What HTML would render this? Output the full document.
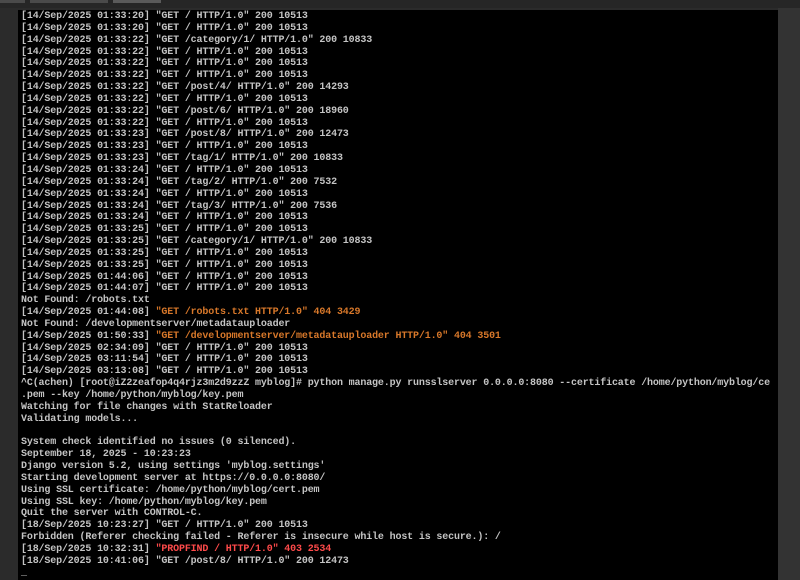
<!DOCTYPE html>
<html><head><meta charset="utf-8"><style>
html,body{margin:0;padding:0;width:800px;height:580px;overflow:hidden;background:#2b2b2b;}
.top{position:absolute;left:0;top:0;width:800px;height:8px;background:#262626;}
.b{position:absolute;top:0;height:3px;background:#4a4a4a;}
.right{position:absolute;left:778px;top:8px;width:22px;height:572px;background:#333;}
.term{position:absolute;left:18px;top:10px;width:760px;height:570px;background:#000;}
pre{position:absolute;left:21px;top:11px;margin:0;font-family:"Liberation Mono",monospace;font-size:10px;letter-spacing:-0.15px;line-height:11.85px;color:#c4c4c4;font-weight:bold;white-space:pre;}
.o{color:#d8782a}.r{color:#ff4a4a}
</style></head><body>
<div class="top"></div><div class="b" style="left:0;width:25px"></div><div class="b" style="left:30px;width:78px"></div><div class="b" style="left:113px;width:48px;background:#5a5a5a"></div>
<div class="right"></div>
<div class="term"></div>
<pre>[14/Sep/2025 01:33:20] "GET / HTTP/1.0" 200 10513
[14/Sep/2025 01:33:20] "GET / HTTP/1.0" 200 10513
[14/Sep/2025 01:33:22] "GET /category/1/ HTTP/1.0" 200 10833
[14/Sep/2025 01:33:22] "GET / HTTP/1.0" 200 10513
[14/Sep/2025 01:33:22] "GET / HTTP/1.0" 200 10513
[14/Sep/2025 01:33:22] "GET / HTTP/1.0" 200 10513
[14/Sep/2025 01:33:22] "GET /post/4/ HTTP/1.0" 200 14293
[14/Sep/2025 01:33:22] "GET / HTTP/1.0" 200 10513
[14/Sep/2025 01:33:22] "GET /post/6/ HTTP/1.0" 200 18960
[14/Sep/2025 01:33:22] "GET / HTTP/1.0" 200 10513
[14/Sep/2025 01:33:23] "GET /post/8/ HTTP/1.0" 200 12473
[14/Sep/2025 01:33:23] "GET / HTTP/1.0" 200 10513
[14/Sep/2025 01:33:23] "GET /tag/1/ HTTP/1.0" 200 10833
[14/Sep/2025 01:33:24] "GET / HTTP/1.0" 200 10513
[14/Sep/2025 01:33:24] "GET /tag/2/ HTTP/1.0" 200 7532
[14/Sep/2025 01:33:24] "GET / HTTP/1.0" 200 10513
[14/Sep/2025 01:33:24] "GET /tag/3/ HTTP/1.0" 200 7536
[14/Sep/2025 01:33:24] "GET / HTTP/1.0" 200 10513
[14/Sep/2025 01:33:25] "GET / HTTP/1.0" 200 10513
[14/Sep/2025 01:33:25] "GET /category/1/ HTTP/1.0" 200 10833
[14/Sep/2025 01:33:25] "GET / HTTP/1.0" 200 10513
[14/Sep/2025 01:33:25] "GET / HTTP/1.0" 200 10513
[14/Sep/2025 01:44:06] "GET / HTTP/1.0" 200 10513
[14/Sep/2025 01:44:07] "GET / HTTP/1.0" 200 10513
Not Found: /robots.txt
[14/Sep/2025 01:44:08] <span class="o">"GET /robots.txt HTTP/1.0" 404 3429</span>
Not Found: /developmentserver/metadatauploader
[14/Sep/2025 01:50:33] <span class="o">"GET /developmentserver/metadatauploader HTTP/1.0" 404 3501</span>
[14/Sep/2025 02:34:09] "GET / HTTP/1.0" 200 10513
[14/Sep/2025 03:11:54] "GET / HTTP/1.0" 200 10513
[14/Sep/2025 03:13:08] "GET / HTTP/1.0" 200 10513
^C(achen) [root@iZ2zeafop4q4rjz3m2d9zzZ myblog]# python manage.py runsslserver 0.0.0.0:8080 --certificate /home/python/myblog/ce
.pem --key /home/python/myblog/key.pem
Watching for file changes with StatReloader
Validating models...

System check identified no issues (0 silenced).
September 18, 2025 - 10:23:23
Django version 5.2, using settings 'myblog.settings'
Starting development server at https://0.0.0.0:8080/
Using SSL certificate: /home/python/myblog/cert.pem
Using SSL key: /home/python/myblog/key.pem
Quit the server with CONTROL-C.
[18/Sep/2025 10:23:27] "GET / HTTP/1.0" 200 10513
Forbidden (Referer checking failed - Referer is insecure while host is secure.): /
[18/Sep/2025 10:32:31] <span class="r">"PROPFIND / HTTP/1.0" 403 2534</span>
[18/Sep/2025 10:41:06] "GET /post/8/ HTTP/1.0" 200 12473
_</pre>
</body></html>
